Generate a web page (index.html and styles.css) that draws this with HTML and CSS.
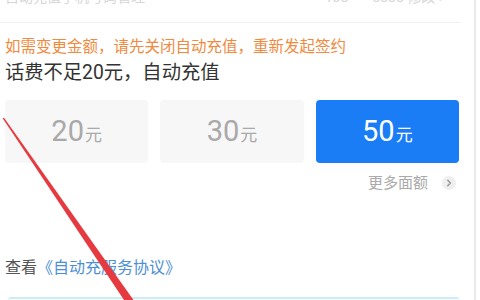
FILE: index.html
```html
<!DOCTYPE html>
<html lang="zh-CN">
<head>
<meta charset="utf-8">
<link rel="stylesheet" href="styles.css">
</head>
<body>
<div class="page">
  <div class="content">
    <div class="top">
      <div class="top-inner">
        <span>自动充值手机号码管理</span>
        <span>138****8888 修改 ›</span>
      </div>
    </div>
    <p class="tip">如需变更金额，请先关闭自动充值，重新发起签约</p>
    <h1 class="title">话费不足20元，自动充值</h1>
    <div class="options">
      <div class="opt"><span class="num">20</span><span class="unit">元</span></div>
      <div class="opt"><span class="num">30</span><span class="unit">元</span></div>
      <div class="opt opt-active"><span class="num">50</span><span class="unit">元</span></div>
    </div>
    <div class="more">
      <span>更多面额</span>
      <span class="more-icon"><svg width="14" height="14" viewBox="0 0 14 14"><path d="M5.8 4.3 L8.4 7 L5.8 9.7" fill="none" stroke="#9a9a9a" stroke-width="1.6" stroke-linecap="round" stroke-linejoin="round"/></svg></span>
    </div>
    <p class="agree">查看<span class="link">《自动充服务协议》</span></p>
    <div class="bottom-box"></div>
  </div>
</div>
<svg class="arrow" width="480" height="300" viewBox="0 0 480 300">
  <polygon points="2.5,118 4.2,118 133.5,300 124,300" fill="#e53a3f"/>
</svg>
</body>
</html>
```
FILE: styles.css
```css
html, body {
  margin: 0;
  padding: 0;
  background: #ffffff;
  width: 480px;
  height: 300px;
  overflow: hidden;
  font-family: Roboto, "Noto Sans CJK SC", "Noto Sans", sans-serif;
}
.page {
  display: flex;
  height: 300px;
}
.content {
  width: 476px;
  border-right: 2px solid #e9e9e9;
  padding: 0 15px 0 5px;
  box-sizing: border-box;
}
.top {
  height: 22px;
  overflow: hidden;
  border-bottom: 1px solid #f1f1f1;
  margin-left: -5px;
  padding-left: 5px;
  margin-right: -2px;
}
.top-inner {
  display: flex;
  justify-content: space-between;
  font-size: 14px;
  line-height: 20px;
  color: #d6d6d6;
  margin-top: -13px;
  padding-right: 18px;
}
.tip {
  margin: 14px 0 0;
  font-size: 15.5px;
  line-height: 20px;
  color: #f08a3e;
}
.title {
  margin: 4px 0 0;
  font-size: 19.3px;
  line-height: 24px;
  font-weight: normal;
  color: #333333;
}
.options {
  margin-top: 15px;
  display: grid;
  grid-template-columns: 1fr 1fr 1fr;
  gap: 12px;
  height: 63px;
}
.opt {
  background: #f7f7f7;
  border-radius: 4px;
  display: flex;
  align-items: baseline;
  justify-content: center;
  padding-top: 14px;
  box-sizing: border-box;
  color: #a9a9a9;
}
.opt-active {
  background: #1a7df5;
  color: #ffffff;
}
.num {
  font-size: 29px;
  line-height: 34px;
}
.unit {
  font-size: 17px;
  margin-left: 1px;
}
.more {
  margin-top: 10px;
  display: flex;
  justify-content: flex-end;
  align-items: center;
  gap: 14px;
  font-size: 15px;
  line-height: 20px;
  color: #aaaaaa;
  padding-right: 3px;
}
.more-icon {
  width: 14px;
  height: 14px;
  border-radius: 50%;
  background: #efefef;
  display: flex;
}
.agree {
  margin: 64px 0 0;
  font-size: 16px;
  line-height: 22px;
  color: #555555;
}
.link {
  color: #4d8fd6;
}
.bottom-box {
  margin: 18px 0 0 3px;
  height: 10px;
  border-top: 2px solid #c9eef8;
  border-radius: 3px 3px 0 0;
}
.arrow {
  position: absolute;
  left: 0;
  top: 0;
  pointer-events: none;
}
```
